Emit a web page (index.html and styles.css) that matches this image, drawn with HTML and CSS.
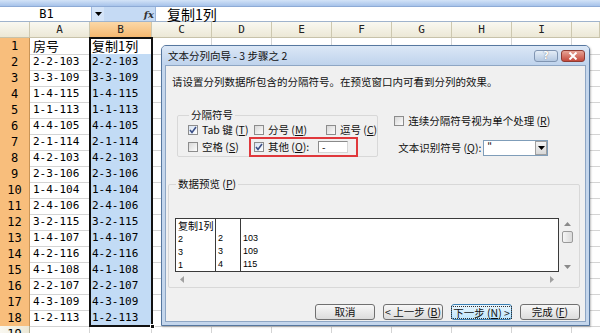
FILE: index.html
```html
<!DOCTYPE html>
<html lang="zh-CN">
<head>
<meta charset="utf-8">
<title>文本分列向导</title>
<link rel="stylesheet" href="styles.css">
</head>
<body>
<div class="app">
  <div class="toolbar"></div>
  <div class="fbar">
    <div class="namebox">B1</div>
    <div class="nbarrow"><svg width="7" height="4" viewBox="0 0 7 4"><path d="M0 0h7L3.5 4z" fill="#000"/></svg></div>
    <div class="fxzone"><span class="fx">fx</span></div>
    <div class="finput">复制1列</div>
  </div>
  <div class="sheet">
    <div class="hrow">
      <div class="corner"></div><div class="ch">A</div><div class="ch sel">B</div><div class="ch">C</div><div class="ch">D</div><div class="ch">E</div><div class="ch">F</div><div class="ch">G</div><div class="ch">H</div><div class="ch">I</div><div class="ch"></div>
    </div>
    <div class="row"><div class="rh on">1</div><div class="c cjk">房号</div><div class="c b act cjk">复制1列</div><div class="rest"></div></div>
    <div class="row"><div class="rh on">2</div><div class="c">2-2-103</div><div class="c b">2-2-103</div><div class="rest"></div></div>
    <div class="row"><div class="rh on">3</div><div class="c">3-3-109</div><div class="c b">3-3-109</div><div class="rest"></div></div>
    <div class="row"><div class="rh on">4</div><div class="c">1-4-115</div><div class="c b">1-4-115</div><div class="rest"></div></div>
    <div class="row"><div class="rh on">5</div><div class="c">1-1-113</div><div class="c b">1-1-113</div><div class="rest"></div></div>
    <div class="row"><div class="rh on">6</div><div class="c">4-4-105</div><div class="c b">4-4-105</div><div class="rest"></div></div>
    <div class="row"><div class="rh on">7</div><div class="c">2-1-114</div><div class="c b">2-1-114</div><div class="rest"></div></div>
    <div class="row"><div class="rh on">8</div><div class="c">4-2-103</div><div class="c b">4-2-103</div><div class="rest"></div></div>
    <div class="row"><div class="rh on">9</div><div class="c">2-3-106</div><div class="c b">2-3-106</div><div class="rest"></div></div>
    <div class="row"><div class="rh on">10</div><div class="c">1-4-104</div><div class="c b">1-4-104</div><div class="rest"></div></div>
    <div class="row"><div class="rh on">11</div><div class="c">2-4-106</div><div class="c b">2-4-106</div><div class="rest"></div></div>
    <div class="row"><div class="rh on">12</div><div class="c">3-2-115</div><div class="c b">3-2-115</div><div class="rest"></div></div>
    <div class="row"><div class="rh on">13</div><div class="c">1-4-107</div><div class="c b">1-4-107</div><div class="rest"></div></div>
    <div class="row"><div class="rh on">14</div><div class="c">4-2-116</div><div class="c b">4-2-116</div><div class="rest"></div></div>
    <div class="row"><div class="rh on">15</div><div class="c">4-1-108</div><div class="c b">4-1-108</div><div class="rest"></div></div>
    <div class="row"><div class="rh on">16</div><div class="c">2-2-107</div><div class="c b">2-2-107</div><div class="rest"></div></div>
    <div class="row"><div class="rh on">17</div><div class="c">4-3-109</div><div class="c b">4-3-109</div><div class="rest"></div></div>
    <div class="row"><div class="rh on">18</div><div class="c">1-2-113</div><div class="c b">1-2-113</div><div class="rest"></div></div>
    <div class="row"><div class="rh">19</div><div class="c"></div><div class="c"></div><div class="rest"></div></div>
  </div>
  <div class="selbox"><span class="handle"></span></div>

  <div class="dialog">
    <div class="titlebar">
      <span class="title">文本分列向导 - 3 步骤之 2</span>
      <div class="tbtns">
        <span class="tb help">?</span>
        <span class="tb close"><svg width="10" height="8" viewBox="0 0 10 8"><path d="M1.5 0.5l7 7M8.5 0.5l-7 7" stroke="#fff" stroke-width="2"/></svg></span>
      </div>
    </div>
    <div class="dbody">
      <p class="intro">请设置分列数据所包含的分隔符号。在预览窗口内可看到分列的效果。</p>
      <div class="opts">
        <fieldset class="delims">
          <legend>分隔符号</legend>
          <div class="drow">
            <label class="cb w1"><span class="box on"><svg width="8" height="8" viewBox="0 0 8 8"><path d="M1 4l2 2.5L7 1" stroke="#3b4f86" stroke-width="1.6" fill="none"/></svg></span>Tab 键 (<u>T</u>)</label>
            <label class="cb w2"><span class="box"></span>分号 (<u>M</u>)</label>
            <label class="cb"><span class="box"></span>逗号 (<u>C</u>)</label>
          </div>
          <div class="drow">
            <label class="cb w1"><span class="box"></span>空格 (<u>S</u>)</label>
            <div class="other">
              <label class="cb wo"><span class="box on"><svg width="8" height="8" viewBox="0 0 8 8"><path d="M1 4l2 2.5L7 1" stroke="#3b4f86" stroke-width="1.6" fill="none"/></svg></span>其他 (<u>O</u>):</label>
              <span class="otherin">-</span>
            </div>
          </div>
        </fieldset>
        <div class="rightopts">
          <label class="cb"><span class="box"></span>连续分隔符号视为单个处理 (<u>R</u>)</label>
          <div class="qual">
            <span class="qlabel">文本识别符号 (<u>Q</u>):</span>
            <span class="select"><span class="selval">"</span><span class="selbtn"><svg width="7" height="4" viewBox="0 0 7 4"><path d="M0 0h7L3.5 4z" fill="#000"/></svg></span></span>
          </div>
        </div>
      </div>
      <fieldset class="preview">
        <legend>数据预览 (<u>P</u>)</legend>
        <div class="pv">
          <div class="pvbox">
            <div class="pcol c1"><span class="ph">复制1列</span><span>2</span><span>3</span><span>1</span></div>
            <div class="pcol c2"><span class="ph"></span><span>2</span><span>3</span><span>4</span></div>
            <div class="pcol c3"><span class="ph"></span><span>103</span><span>109</span><span>115</span></div>
          </div>
          <div class="vscroll">
            <svg width="7" height="4" viewBox="0 0 7 4"><path d="M0 4h7L3.5 0z" fill="#8a8a8a"/></svg>
            <span class="thumb"></span>
            <span class="vfill"></span>
            <svg width="7" height="4" viewBox="0 0 7 4"><path d="M0 0h7L3.5 4z" fill="#8a8a8a"/></svg>
          </div>
          <div class="hscroll">
            <svg width="4" height="7" viewBox="0 0 4 7"><path d="M4 0v7L0 3.5z" fill="#a0a0a0"/></svg>
            <svg width="4" height="7" viewBox="0 0 4 7"><path d="M0 0v7L4 3.5z" fill="#a0a0a0"/></svg>
          </div>
        </div>
      </fieldset>
      <div class="buttons">
        <button class="btn">取消</button>
        <button class="btn">&lt; 上一步 (<u>B</u>)</button>
        <button class="btn def"><span class="focus">下一步 (<u>N</u>) &gt;</span></button>
        <button class="btn">完成 (<u>F</u>)</button>
      </div>
    </div>
  </div>
</div>
</body>
</html>
```
FILE: styles.css
```css
* { box-sizing: border-box; margin: 0; padding: 0; }
html, body { width: 600px; height: 333px; overflow: hidden; background: #fff; }
body { font-family: "DejaVu Sans Mono", "Noto Sans CJK SC", monospace; color: #000; }
.app { position: relative; width: 600px; height: 333px; overflow: hidden; }

.toolbar { height: 7px; background: linear-gradient(#d3e3f7, #a7c3ea); border-bottom: 1px solid #8eabd6; }

.fbar { display: flex; height: 15px; background: #c5daf4; border-bottom: 1px solid #9fb3cc; }
.namebox { width: 91px; background: #fff; font-size: 12px; line-height: 14px; text-align: center; padding-left: 2px; }
.nbarrow { width: 13px; background: #d4e4f8; display: flex; align-items: center; justify-content: center; border-left: 1px solid #9fb8dc; }
.fxzone { width: 51px; display: flex; align-items: center; justify-content: flex-end; padding-right: 1px; }
.fx { font-family: "DejaVu Serif", serif; font-style: italic; font-weight: bold; font-size: 10px; color: #333; }
.finput { flex: 1; background: #fff; font-family: "Noto Sans CJK SC", sans-serif; font-size: 14px; line-height: 14px; padding-left: 11px; border-left: 1px solid #9fb8dc; }

.sheet { display: flex; flex-direction: column; }
.hrow { display: grid; grid-template-columns: 30px 60px 62px repeat(7, 60px) 1fr; height: 16px; background: linear-gradient(#f9f8f1, #ece8d6); border-bottom: 1px solid #c7c2aa; }
.corner, .ch { border-right: 1px solid #cdc8b0; }
.ch { font-size: 11px; line-height: 15px; text-align: center; color: #222; }
.ch.sel { background: linear-gradient(#fbd8a8, #f6b86f); }

.row { display: grid; grid-template-columns: 30px 60px 62px 1fr; height: 16px; }
.rh { background: linear-gradient(90deg, #f9f8f1, #ece8d6); border-right: 1px solid #b7b196; border-bottom: 1px solid #cdc8b0; font-size: 12px; line-height: 16px; text-align: center; }
.rh.on { background: #f8be7c; border-bottom-color: #e8a866; border-right-color: #c99456; }
.c { border-right: 1px solid #d4d4d4; border-bottom: 1px solid #d4d4d4; font-size: 11px; line-height: 16px; padding-left: 3px; white-space: nowrap; overflow: hidden; }
.c.cjk { font-family: "Noto Sans CJK SC", sans-serif; font-size: 13px; line-height: 15px; overflow: visible; }
.c.b { background: #c2dbf5; padding-left: 2px; }
.c.b.act { background: #fff; }
.rest { border-bottom: 1px solid #d4d4d4; background-image: repeating-linear-gradient(90deg, transparent 0 59px, #d4d4d4 59px 60px); }

.selbox { position: absolute; left: 89px; top: 37px; width: 64px; height: 290px; border: 2px solid #111; pointer-events: none; }
.handle { position: absolute; right: -4px; bottom: -4px; width: 5px; height: 5px; background: #111; border: 1px solid #fff; }

/* dialog */
.dialog { position: absolute; left: 161px; top: 45px; width: 429px; height: 281px; border: 1px solid #56779f; border-radius: 5px 5px 0 0; background: #c4d6ec; display: flex; flex-direction: column; font-family: "Noto Sans CJK SC", sans-serif; font-size: 10.5px; box-shadow: 1px 1px 2px rgba(0,0,0,0.25); }
.titlebar { height: 19px; display: flex; align-items: flex-start; justify-content: space-between; background: linear-gradient(#dbe7f6, #bfd3ec); border-radius: 4px 4px 0 0; padding: 0 4px 0 6px; }
.title { line-height: 19px; color: #111; }
.tbtns { display: flex; gap: 3px; margin-top: 4px; }
.tb { width: 24px; height: 12px; border-radius: 3px; display: flex; align-items: center; justify-content: center; }
.help { background: linear-gradient(#e4edf7, #b4c8e1); border: 1px solid #8095b2; color: #fff; font-family: "DejaVu Sans", sans-serif; font-weight: bold; font-size: 10px; line-height: 10px; text-shadow: 0 0 1px #556; }
.close { background: linear-gradient(#e8a496, #c4493c); border: 1px solid #8e3b33; }

.dbody { flex: 1; margin: 0 3px 3px; background: #f0f0f0; border: 1px solid #8ea6c4; padding: 9px 5px 0 6px; display: flex; flex-direction: column; }
.intro { line-height: 14px; color: #111; }
.opts { display: flex; margin-top: 20px; align-items: flex-start; }
fieldset { border: 1px solid #d8d8d8; border-radius: 2px; }
legend { line-height: 12px; padding: 0 2px; margin-left: 1px; color: #111; }
.delims { width: 200px; margin-left: 5px; padding: 0 0 1px 10px; }
.drow { display: flex; align-items: center; height: 17px; }
.cb { display: flex; align-items: center; line-height: 14px; white-space: nowrap; color: #111; }
.w1 { width: 66px; }
.w2 { width: 72px; }
.wo { width: 64px; }
.box { width: 10px; height: 10px; border: 1px solid #8c8c8c; background: linear-gradient(135deg, #d8d8d8, #fdfdfd); margin-right: 4px; display: flex; align-items: center; justify-content: center; flex: none; }
.box.on { background: linear-gradient(135deg, #d9e4f3, #fdfdfd); }
.other { display: flex; align-items: center; height: 20px; margin: -1px 0 -2px -5px; padding: 0 8px 0 3px; border: 2px solid #e0383c; }
.otherin { width: 30px; height: 12px; background: #fff; border: 1px solid #8a8a8a; border-right-color: #d6d6d6; border-bottom-color: #d6d6d6; font-size: 10px; line-height: 9px; padding-left: 3px; }
.rightopts { display: flex; flex-direction: column; margin-left: 16px; padding-top: 5px; }
.qual { display: flex; align-items: center; height: 17px; margin-top: 11px; padding-left: 4px; }
.qlabel { width: 85px; line-height: 14px; color: #111; white-space: nowrap; }
.select { width: 65px; height: 16px; background: #fff; border: 1px solid #7f9db9; display: flex; justify-content: space-between; }
.selval { font-size: 10px; line-height: 12px; padding-left: 3px; }
.selbtn { width: 12px; height: 14px; background: linear-gradient(#f4f4f4, #d8d8d8); border: 1px solid #a0a0a0; display: flex; align-items: center; justify-content: center; }

.preview { margin: 21px 0 0 -4px; width: 412px; padding: 28px 0 1px 6px; }
.pv { display: grid; grid-template-columns: 384px 17px; grid-template-rows: 54px 14px; }
.pvbox { background: #fff; border: 1px solid #3a3a3a; display: flex; font-family: "Liberation Sans", "Noto Sans CJK SC", sans-serif; font-size: 9px; }
.pcol { display: flex; flex-direction: column; border-right: 1px solid #3a3a3a; padding-left: 2px; }
.pcol span { line-height: 13px; height: 13px; }
.pcol .ph { height: 14px; line-height: 14px; font-family: "Noto Sans CJK SC", sans-serif; font-size: 10px; }
.c1 { width: 40px; }
.c2 { width: 25px; }
.c3 { flex: 1; border-right: 0; }
.vscroll { display: flex; flex-direction: column; align-items: center; padding: 4px 0 3px; }
.thumb { width: 11px; height: 12px; margin-top: 5px; border: 1px solid #9a9a9a; border-radius: 2px; background: linear-gradient(90deg, #f6f6f6, #dadada); }
.vfill { flex: 1; }
.hscroll { display: flex; justify-content: space-between; align-items: center; padding: 0 5px; }

.buttons { display: flex; justify-content: flex-end; gap: 8px; margin-top: 16px; }
.btn { width: 60px; height: 16px; font-family: "Noto Sans CJK SC", sans-serif; font-size: 10.5px; line-height: 14px; color: #111; background: linear-gradient(#f7f7f7, #dcdcdc); border: 1px solid #707070; border-radius: 3px; display: flex; align-items: center; justify-content: center; white-space: nowrap; }
.btn.def { width: 61px; border-color: #3c7fb1; background: linear-gradient(#eaf6fd, #bee6fd); padding: 1px; }
.focus { border: 1px dotted #333; padding: 0 1px; line-height: 11px; white-space: nowrap; }
```
